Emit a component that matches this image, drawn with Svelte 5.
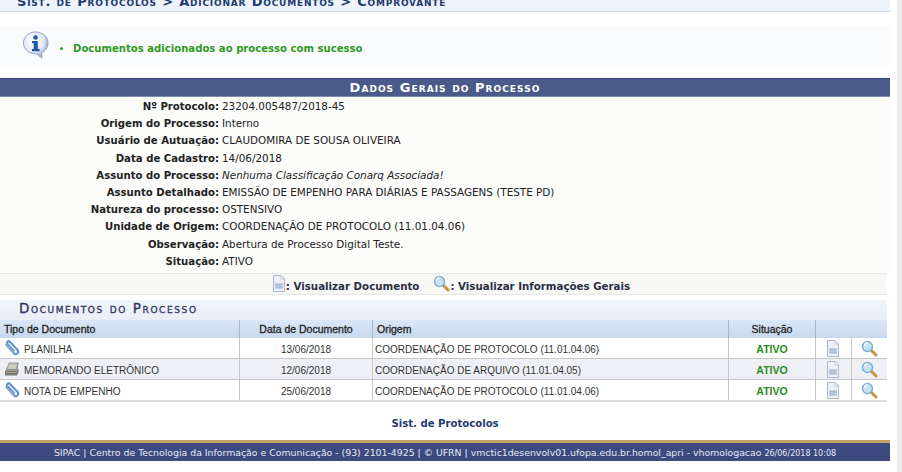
<script>
  const fields = [
    { label: 'Nº Protocolo:', value: '23204.005487/2018-45' },
    { label: 'Origem do Processo:', value: 'Interno' },
    { label: 'Usuário de Autuação:', value: 'CLAUDOMIRA DE SOUSA OLIVEIRA' },
    { label: 'Data de Cadastro:', value: '14/06/2018' },
    { label: 'Assunto do Processo:', value: 'Nenhuma Classificação Conarq Associada!', italic: true },
    { label: 'Assunto Detalhado:', value: 'EMISSÃO DE EMPENHO PARA DIÁRIAS E PASSAGENS (TESTE PD)' },
    { label: 'Natureza do processo:', value: 'OSTENSIVO' },
    { label: 'Unidade de Origem:', value: 'COORDENAÇÃO DE PROTOCOLO (11.01.04.06)' },
    { label: 'Observação:', value: 'Abertura de Processo Digital Teste.' },
    { label: 'Situação:', value: 'ATIVO' }
  ];

  const docs = [
    { tipo: 'PLANILHA', icon: 'clip', data: '13/06/2018', origem: 'COORDENAÇÃO DE PROTOCOLO (11.01.04.06)' },
    { tipo: 'MEMORANDO ELETRÔNICO', icon: 'memo', data: '12/06/2018', origem: 'COORDENAÇÃO DE ARQUIVO (11.01.04.05)' },
    { tipo: 'NOTA DE EMPENHO', icon: 'clip', data: '25/06/2018', origem: 'COORDENAÇÃO DE PROTOCOLO (11.01.04.06)' }
  ];
</script>

{#snippet docIcon()}
  <svg class="ico-doc" viewBox="0 0 14 17" width="14" height="17">
    <path d="M1.500 .5h7.500l3.500 3.500v12.500h-11z" fill="#eef1f7" stroke="#aeb6c6" />
    <path d="M9 .5v3.500h3.500z" fill="#fff" stroke="#aeb6c6" stroke-width=".7" />
    <path d="M3 8h8v6h-8z" fill="#c5d2e6" />
    <path d="M3.500 9.500h7M3.500 11h7M3.500 12.500h7" stroke="#9fb0cc" stroke-width=".7" />
  </svg>
{/snippet}

{#snippet lensIcon()}
  <svg class="ico-lens" viewBox="0 0 17 17" width="17" height="17">
    <path d="M10.500 10.500l4.500 4.500" stroke="#c9963f" stroke-width="3" stroke-linecap="round" />
    <circle cx="6.500" cy="6.500" r="5" fill="#c6e2f5" stroke="#7fb0d2" stroke-width="1.500" />
    <path d="M3.500 6a3 3 0 0 1 3-3" fill="none" stroke="#fff" stroke-width="1.300" />
  </svg>
{/snippet}

{#snippet clipIcon()}
  <svg viewBox="0 0 16 16" width="16" height="16">
    <path
      d="M2.500 5l7.500 8.300a2.400 2.400 0 0 0 3.600-3.200l-7.800-8.300a1.600 1.600 0 0 0-2.400 2.100l6.300 6.800"
      fill="none"
      stroke="#6a95cc"
      stroke-width="2.200"
      stroke-linecap="round"
    />
    <path d="M3 5l7 7.700" stroke="#b8d0ec" stroke-width=".7" fill="none" />
  </svg>
{/snippet}

{#snippet memoIcon()}
  <svg viewBox="0 0 16 16" width="16" height="16">
    <path d="M5 1.500h9.500l-1 8h-12z" fill="#8f928f" />
    <path d="M5.500 2.500h7.500l-.8 5.500h-9z" fill="#c9cbc2" />
    <path d="M1 9.500h12l1.500-2v3.500l-1.500 3.500h-12z" fill="#777a76" />
    <path d="M1.500 11.500h11" stroke="#b5a67e" />
  </svg>
{/snippet}

<div class="page">
  <main>
    <h2 class="crumb">Sist. de Protocolos &gt; Adicionar Documentos &gt; Comprovante</h2>

    <div class="message">
      <svg viewBox="0 0 28 28" width="28" height="28">
        <defs>
          <radialGradient id="bubble" cx="40%" cy="35%" r="70%">
            <stop offset="0" stop-color="#ffffff" />
            <stop offset="0.6" stop-color="#e4e9f5" />
            <stop offset="1" stop-color="#8c98be" />
          </radialGradient>
        </defs>
        <path
          d="M13.500 1c7 0 12.500 4.800 12.500 11 0 4.500-2.800 8-6.500 9.800l.5 5.200-5.800-4.200c-.3 0-.5 0-.7 0-6.500 0-12-4.800-12-10.800s5-11 12-11z"
          fill="url(#bubble)"
          stroke="#98a2c2"
        />
        <circle cx="13.500" cy="6.500" r="2.300" fill="#1c5aa5" />
        <path d="M10 10h5.800v8h1.800v2.200h-7.600v-2.200h1.700v-5.800h-1.700z" fill="#1c5aa5" />
      </svg>
      <ul>
        <li>Documentos adicionados ao processo com sucesso</li>
      </ul>
    </div>

    <h3 class="band">Dados Gerais do Processo</h3>

    <dl class="fields">
      {#each fields as f}
        <dt>{f.label}</dt>
        <dd class:italic={f.italic}>{f.value}</dd>
      {/each}
    </dl>

    <div class="legend">
      <span class="legend-item">{@render docIcon()}: Visualizar Documento</span>
      <span class="legend-item">{@render lensIcon()}: Visualizar Informações Gerais</span>
    </div>

    <div class="docs">
      <h4>Documentos do Processo</h4>
      <table>
        <thead>
          <tr>
            <th class="tipo">Tipo de Documento</th>
            <th class="data">Data de Documento</th>
            <th class="origem">Origem</th>
            <th class="sit">Situação</th>
            <th class="act" colspan="2"></th>
          </tr>
        </thead>
        <tbody>
          {#each docs as d}
            <tr>
              <td>
                <span class="tipo-cell">
                  {#if d.icon === 'clip'}{@render clipIcon()}{:else}{@render memoIcon()}{/if}
                  {d.tipo}
                </span>
              </td>
              <td class="center">{d.data}</td>
              <td>{d.origem}</td>
              <td class="center ativo">ATIVO</td>
              <td class="center icon-cell">{@render docIcon()}</td>
              <td class="center icon-cell">{@render lensIcon()}</td>
            </tr>
          {/each}
        </tbody>
      </table>
    </div>

    <p class="back">Sist. de Protocolos</p>

    <footer>
      SIPAC | Centro de Tecnologia da Informação e Comunicação - (93) 2101-4925 | © UFRN | vmctic1desenvolv01.ufopa.edu.br.homol_apri - vhomologacao <small>26/06/2018 10:08</small>
    </footer>
  </main>
  <div class="scrollbar"></div>
</div>

<style>
  :global(body) {
    background: #fff;
    overflow: hidden;
  }

  .page {
    display: flex;
    justify-content: space-between;
    width: 902px;
    height: 472px;
    overflow: hidden;
    font-family: 'DejaVu Sans', Verdana, sans-serif;
    font-size: 10.4px;
    color: #222;
  }

  main {
    width: 890px;
  }

  .scrollbar {
    width: 5px;
    background: #ececec;
  }

  .crumb {
    margin: -7px 0 0;
    padding: 0 0 0 17px;
    height: 18px;
    line-height: 18px;
    background: linear-gradient(#f2f6fc, #ecf2fa);
    border-bottom: 1px solid #ccd3e4;
    font-size: 13px;
    font-variant: small-caps;
    font-weight: bold;
    letter-spacing: 0.8px;
    color: #223a6e;
    box-sizing: content-box;
  }

  .message {
    display: flex;
    align-items: center;
    margin-top: 14px;
    height: 40px;
    padding-left: 22px;
    background: #fafbfd;
  }

  .message svg {
    margin-top: -2px;
  }

  .message ul {
    margin: 4px 0 0;
    padding: 0 0 0 23px;
    color: #2f9a22;
    font-size: 10.1px;
    font-weight: bold;
  }

  .band {
    margin: 12px 0 0;
    height: 19px;
    line-height: 18px;
    text-align: center;
    background: #4a5a8b;
    border-top: 1px solid #37467a;
    border-bottom: 1px solid #7f8bb0;
    box-sizing: border-box;
    color: #fff;
    font-size: 13px;
    font-variant: small-caps;
    letter-spacing: 1.05px;
  }

  .fields {
    display: grid;
    grid-template-columns: 219px 1fr;
    grid-auto-rows: 17.2px;
    column-gap: 3px;
    margin: 1px 0 0;
    line-height: 17.2px;
    background: #fcfcfb;
    padding-bottom: 3px;
  }

  dt {
    text-align: right;
    font-weight: bold;
    font-size: 10.15px;
    white-space: nowrap;
  }

  dd {
    margin: 0;
    white-space: nowrap;
  }

  .italic {
    font-style: italic;
  }

  .legend {
    display: flex;
    justify-content: center;
    gap: 14px;
    width: 886px;
    height: 22px;
    padding: 4px 0 0 16px;
    align-items: center;
    background: #f8f8f6;
    border-top: 1px solid #e6e6e4;
    border-bottom: 1px solid #e6e6e4;
    box-sizing: border-box;
    font-weight: bold;
    font-size: 10.25px;
    color: #2a2f45;
  }

  .legend-item {
    display: inline-flex;
    align-items: center;
  }

  .legend-item svg {
    margin-top: -5px;
  }

  .docs {
    width: 887px;
    margin-top: 5px;
  }

  h4 {
    margin: 0;
    height: 20px;
    line-height: 17px;
    padding-left: 19px;
    background: linear-gradient(#f0f4fb, #e9eef7);
    font-size: 13.5px;
    font-weight: normal;
    font-variant: small-caps;
    letter-spacing: 1.6px;
    color: #2d3560;
    -webkit-text-stroke: 0.3px #2d3560;
  }

  table {
    width: 887px;
    table-layout: fixed;
    border-collapse: collapse;
    font-family: 'Liberation Sans', Arial, sans-serif;
    font-size: 10px;
    color: #333;
    border-bottom: 2px solid #ddd;
  }

  th {
    height: 18px;
    padding: 0 4px;
    text-align: left;
    font-size: 10.5px;
    font-weight: normal;
    color: #222;
    background: linear-gradient(#dbe7f6, #c6d8ef);
    border-left: 1px solid #aab6c8;
    -webkit-text-stroke: 0.3px #222;
  }

  th:first-child,
  td:first-child {
    border-left: none;
  }

  th.tipo { width: 231px; }
  th.data { width: 124px; text-align: center; }
  th.origem { width: 347px; }
  th.sit { width: 78px; text-align: center; }

  td {
    height: 21px;
    padding: 2px 2px 0;
    box-sizing: border-box;
    border-left: 1px solid #c8c8c8;
    border-bottom: 1px solid #c8c8c8;
    white-space: nowrap;
    background: #fff;
  }

  tbody tr:nth-child(2) td {
    background: #eef0f5;
  }

  .tipo-cell {
    display: flex;
    align-items: center;
    gap: 4px;
    padding-left: 2px;
  }

  .tipo-cell svg {
    margin-top: -2px;
  }

  .center {
    text-align: center;
  }

  .ativo {
    color: #2a8a1c;
    font-size: 10.5px;
    font-weight: bold;
    padding-top: 1px;
  }

  .icon-cell {
    padding: 0;
  }

  .icon-cell svg {
    display: block;
    margin: 0 auto;
  }

  .back {
    margin: 15px 0 0;
    height: 14px;
    line-height: 14px;
    text-align: center;
    font-weight: bold;
    font-size: 10.15px;
    color: #1f3d70;
  }

  footer {
    margin-top: 9px;
    height: 21px;
    line-height: 20px;
    text-align: center;
    box-sizing: border-box;
    background: #3c4a80;
    border-top: 3px solid #c4a26a;
    color: #e6e9f2;
    font-size: 9.33px;
    white-space: nowrap;
  }

  footer small {
    font-size: 8px;
  }
</style>
